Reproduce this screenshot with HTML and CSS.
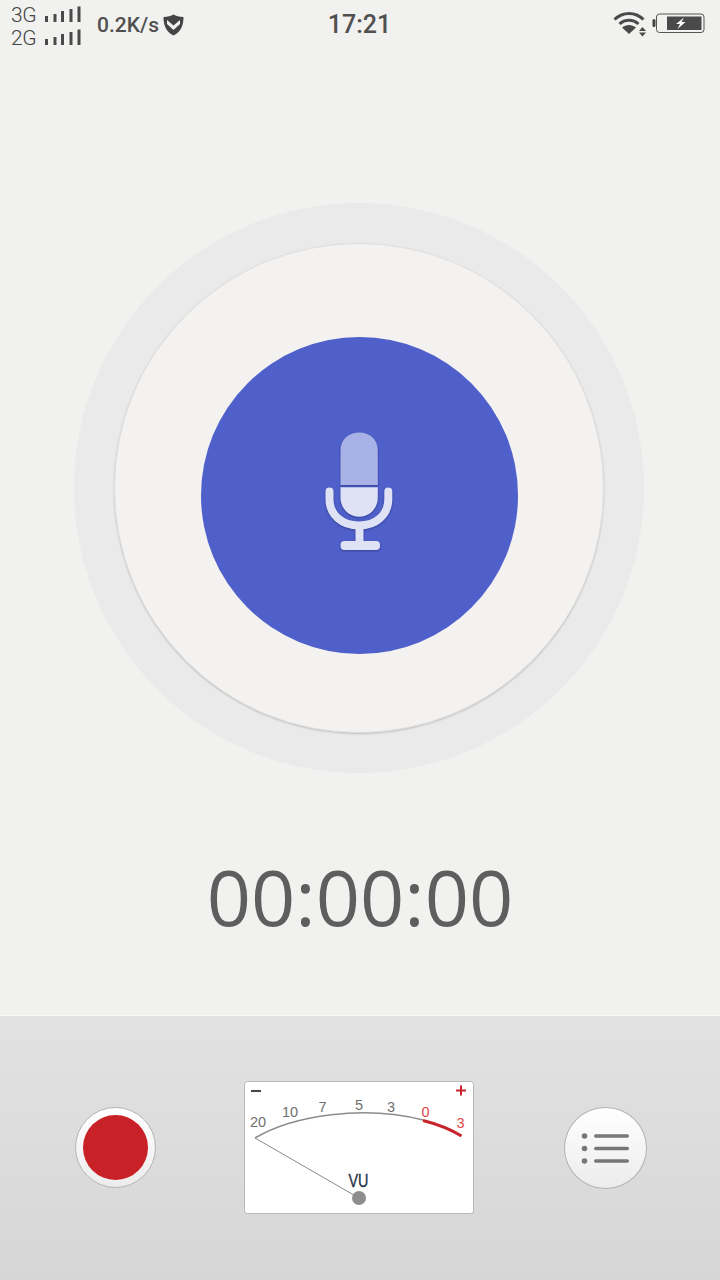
FILE: index.html
```html
<!DOCTYPE html>
<html>
    <head>
        <meta http-equiv="Content-Type" content="text/html; charset=UTF-8">
        <title>Recorder</title>
        <link rel="stylesheet" href="styles.css">
    </head>
    <body>
        <div class="page">
            <section class="status">
                <div class="status-left">
                    <div class="net">
                        <div class="net-row">
                            <span class="net-name">3G</span>
                            <svg class="bars" width="38" height="17" viewBox="0 0 38 17"><path d="M1 10h3v6H1zM9.500 8h3v8h-3zM17 5h3v11h-3zM25.500 3h3v13h-3zM33.500 0.500h3v15.500h-3z"/></svg>
                        </div>
                        <div class="net-row">
                            <span class="net-name">2G</span>
                            <svg class="bars" width="38" height="17" viewBox="0 0 38 17"><path d="M1 10h3v6H1zM9.500 8h3v8h-3zM17 5h3v11h-3zM25.500 3h3v13h-3zM33.500 0.500h3v15.500h-3z"/></svg>
                        </div>
                    </div>
                    <span class="speed">0.2K/s</span>
                    <svg class="shield" width="21" height="22" viewBox="0 0 21 22">
                        <path d="M10.500 0.500C13 2 16 3 20.500 3C20.500 11 18 18 10.500 21.500C3 18 0.500 11 0.500 3C5 3 8 2 10.500 0.500Z" fill="#444"/>
                        <path d="M4 6L10.500 11.500L17 6V10L10.500 16L4 10Z" fill="#f1f1ef"/>
                    </svg>
                </div>
                <span class="clock">17:21</span>
                <div class="status-right">
                    <svg width="36" height="26" viewBox="0 0 36 26">
                        <g fill="none" stroke="#4a4a4a" stroke-width="3">
                            <path d="M1.500 8.500C10 0.500 22 0.500 30.500 8.500"/>
                            <path d="M6.500 13C12 8 20 8 25.500 13"/>
                        </g>
                        <path d="M16 23L9 16.500C13 13 19 13 23 16.500Z" fill="#4a4a4a"/>
                        <path d="M26 20H33L29.500 16ZM26 21.500H33L29.500 25.500Z" fill="#4a4a4a"/>
                    </svg>
                    <svg width="54" height="22" viewBox="0 0 54 22">
                        <rect x="0.500" y="6" width="3" height="8" rx="1.500" fill="#444"/>
                        <rect x="4.500" y="1" width="47.500" height="18.500" rx="3" fill="none" stroke="#555" stroke-width="1"/>
                        <rect x="15" y="3.500" width="34.500" height="13.500" fill="#4a4a4a"/>
                        <path d="M32 4.500L24 11H28L25.500 16L33.500 9H29.500Z" fill="#fff"/>
                    </svg>
                </div>
            </section>

            <section class="dial">
                <div class="dial-inner">
                    <div class="mic-btn">
                        <svg class="mic" width="80" height="130" viewBox="0 0 80 130">
                            <path d="M21.500 54V19.500C21.500 8 30 1.500 40.200 1.500C50.500 1.500 58.800 8 58.800 19.500V54Z" fill="#a9b2e6"/>
                            <path d="M21.500 56.300H58.800V66.500C58.800 77.500 50.500 85.700 40.200 85.700C30 85.700 21.500 77.500 21.500 66.500Z" fill="#dfe1f5"/>
                            <path d="M10.500 60.500V68C10.500 84 23 94.500 40 94.500C57 94.500 69.300 84 69.300 68V60.500" fill="none" stroke="#dfe1f5" stroke-width="8" stroke-linecap="round"/>
                            <rect x="36.500" y="96" width="8" height="16" fill="#dfe1f5"/>
                            <rect x="21.500" y="110" width="39.500" height="9" rx="4" fill="#dfe1f5"/>
                        </svg>
                    </div>
                </div>
            </section>

            <div class="timer">00:00:00</div>

            <section class="controls">
                <div class="round-btn rec-btn"><span class="rec-dot"></span></div>
                <svg class="vu" width="230" height="133" viewBox="0 0 230 133">
                    <rect x="0.500" y="0.500" width="229" height="132" rx="3" fill="#fff" stroke="#b8b8b8"/>
                    <rect x="7" y="9" width="10" height="2" fill="#444"/>
                    <path d="M212 9.500h10M217 4.500v10" stroke="#c8232a" stroke-width="2" fill="none"/>
                    <g class="vu-nums">
                        <text x="14" y="46">20</text>
                        <text x="46" y="36">10</text>
                        <text x="78.500" y="31">7</text>
                        <text x="115" y="28.500">5</text>
                        <text x="147" y="30.500">3</text>
                    </g>
                    <g class="vu-nums vu-red">
                        <text x="181.500" y="35.500">0</text>
                        <text x="216.500" y="46.500">3</text>
                    </g>
                    <path d="M11 57C50 34 120 24 179 39" fill="none" stroke="#8c8c8c" stroke-width="1.500"/>
                    <path d="M179 39.500C193 43 206 48 217.500 55" fill="none" stroke="#c8232a" stroke-width="3"/>
                    <path d="M11 57L115 117" stroke="#8a8a8a" stroke-width="1" fill="none"/>
                    <text class="vu-label" x="114.500" y="106" textLength="20" lengthAdjust="spacingAndGlyphs">VU</text>
                    <circle cx="115" cy="117" r="7" fill="#8e8e8e"/>
                </svg>
                <div class="round-btn list-btn">
                    <svg class="list-icon" width="52" height="32" viewBox="0 0 52 32">
                        <g fill="#777">
                            <circle cx="3.500" cy="4" r="2.800"/>
                            <circle cx="3.500" cy="16.500" r="2.800"/>
                            <circle cx="3.500" cy="29" r="2.800"/>
                            <rect x="13" y="2.300" width="35" height="3.500" rx="1.700"/>
                            <rect x="13" y="14.800" width="35" height="3.500" rx="1.700"/>
                            <rect x="13" y="27.300" width="35" height="3.500" rx="1.700"/>
                        </g>
                    </svg>
                </div>
            </section>
        </div>
    </body>
</html>
```

FILE: styles.css
```css
html, body {
    margin: 0px;
    padding: 0px;
}
body {
    background-color: #f1f1ef;
    font-family: "Roboto", "Liberation Sans", sans-serif;
}
.page {
    width: 720px;
    height: 1280px;
    display: flex;
    flex-direction: column;
    overflow: hidden;
}
.status {
    height: 48px;
    flex: none;
    display: grid;
    grid-template-columns: 1fr auto 1fr;
    align-items: center;
    padding: 0px 14px 0px 11px;
    color: #4a4a4a;
}
.status-left {
    display: flex;
    align-items: center;
}
.status-right {
    display: flex;
    align-items: center;
    justify-content: flex-end;
    gap: 3px;
    margin-top: -1px;
}
.net {
    display: flex;
    flex-direction: column;
    width: 86px;
    padding-top: 3px;
    align-self: flex-start;
}
.net-row {
    display: flex;
    align-items: center;
    height: 23px;
}
.net-name {
    font-size: 21px;
    font-weight: 300;
    letter-spacing: -0.5px;
    width: 33px;
    color: #444;
}
.bars {
    fill: #4a4a4a;
}
.speed {
    font-size: 21px;
    font-weight: 500;
    width: 66px;
    color: #505050;
}
.clock {
    font-size: 25px;
    font-weight: 500;
    color: #505050;
    margin-left: 2px;
}
.dial {
    flex: none;
    width: 570px;
    height: 570px;
    margin: 155px 0px 0px 74px;
    border-radius: 50%;
    background-color: #eaeaea;
    display: flex;
    align-items: center;
    justify-content: center;
}
.dial-inner {
    width: 490px;
    height: 490px;
    box-sizing: border-box;
    border-radius: 50%;
    background-color: #f3f2f1;
    border: 1px solid #e2e1e0;
    box-shadow: 0px 1px 2px rgba(0,0,0,0.18);
    display: flex;
    align-items: center;
    justify-content: center;
}
.mic-btn {
    width: 317px;
    height: 317px;
    margin-top: 15px;
    border-radius: 50%;
    background-color: #4f60ca;
    display: flex;
    align-items: center;
    justify-content: center;
}
.mic {
    filter: drop-shadow(0px 1px 1px rgba(30,40,110,0.55));
}
.timer {
    flex: 1;
    display: flex;
    align-items: center;
    justify-content: center;
    font-family: "Open Sans", "Liberation Sans", sans-serif;
    font-size: 77.500px;
    color: #5e5e5e;
    padding-top: 4px;
    box-sizing: border-box;
}
.controls {
    flex: none;
    height: 263px;
    padding-bottom: 1px;
    padding-left: 75px;
    display: flex;
    align-items: center;
    border-top: 1px solid #f8f8f8;
    background: linear-gradient(#e2e2e2, #d6d6d6);
}
.round-btn {
    box-sizing: border-box;
    border-radius: 50%;
    border: 1px solid #b4b4b4;
    background: linear-gradient(#ffffff, #ececec);
    display: flex;
    align-items: center;
    justify-content: center;
    flex: none;
}
.rec-btn {
    width: 81px;
    height: 81px;
    margin-right: 88px;
}
.rec-dot {
    width: 65px;
    height: 65px;
    border-radius: 50%;
    background-color: #c92128;
}
.vu {
    flex: none;
    margin-right: 90px;
}
.vu-nums text {
    font-family: "Liberation Sans", sans-serif;
    font-size: 14.500px;
    fill: #707070;
    text-anchor: middle;
}
.vu-nums.vu-red text {
    fill: #e0464c;
}
.vu-label {
    font-family: "Liberation Sans", sans-serif;
    font-size: 18px;
    fill: #1f2f44;
    stroke: #1f2f44;
    stroke-width: 0.3px;
    text-anchor: middle;
}
.list-btn {
    width: 83px;
    height: 82px;
}
.list-icon {
    margin-left: 2px;
}
```
